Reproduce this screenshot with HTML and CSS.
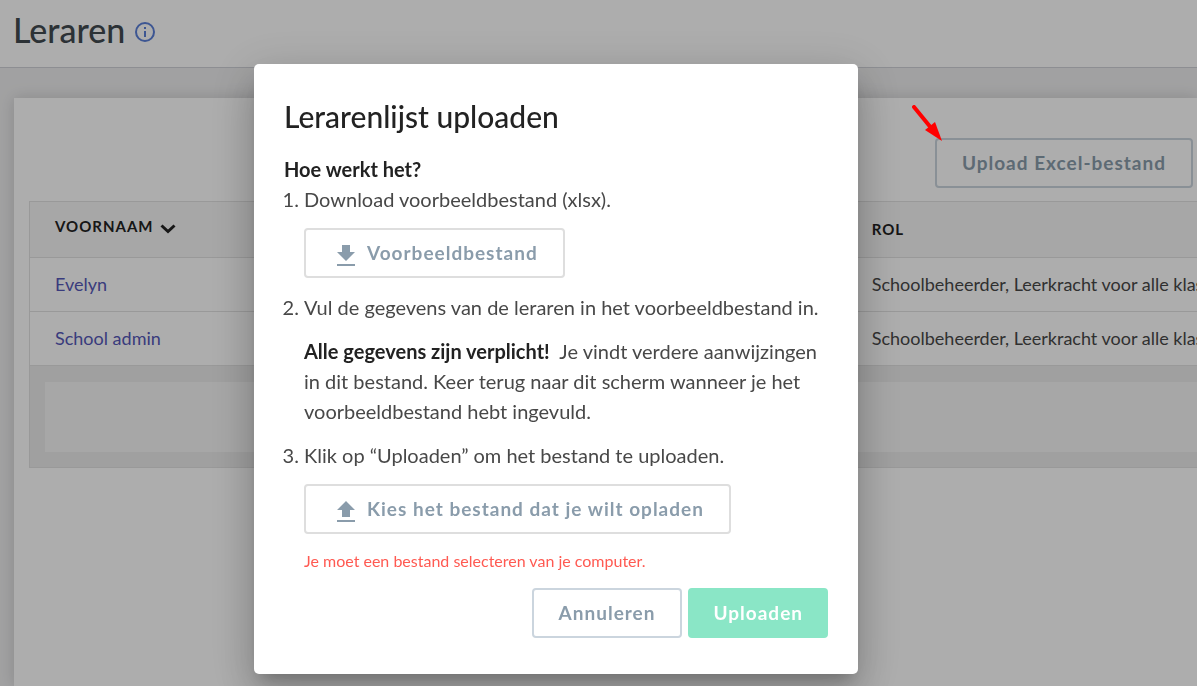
FILE: index.html
```html
<!DOCTYPE html>
<html lang="nl">
<head>
  <meta charset="UTF-8">
  <meta name="viewport" content="width=device-width, initial-scale=1.0">
  <title>Leraren</title>
  <link rel="stylesheet" href="styles.css">
</head>
<body>
  <header class="page-header">
    <h1>Leraren</h1>
    <svg class="info-icon" width="20" height="20" viewBox="0 0 20 20" fill="none" stroke="#5a7fd8" stroke-width="2">
      <circle cx="10" cy="10" r="9"/>
      <path d="M10 9v6M10 5v2"/>
    </svg>
  </header>

  <main class="content">
    <div class="card">
      <div class="toolbar">
        <button class="btn btn-outline">Upload Excel-bestand</button>
      </div>
      <table class="teachers">
        <thead>
          <tr>
            <th class="col-name">
              <span class="sort">Voornaam
                <svg width="16" height="10" viewBox="0 0 16 10" fill="none" stroke="#222" stroke-width="3">
                  <path d="M1.5 1.5L8 7.500L14.500 1.5"/>
                </svg>
              </span>
            </th>
            <th>Rol</th>
          </tr>
        </thead>
        <tbody>
          <tr>
            <td><a href="#">Evelyn</a></td>
            <td>Schoolbeheerder, Leerkracht voor alle klassen</td>
          </tr>
          <tr>
            <td><a href="#">School admin</a></td>
            <td>Schoolbeheerder, Leerkracht voor alle klassen</td>
          </tr>
        </tbody>
      </table>
      <div class="table-footer">
        <div class="table-footer-inner"></div>
      </div>
    </div>
  </main>

  <div class="overlay">
    <div class="dialog" role="dialog" aria-labelledby="dialog-title">
      <h2 id="dialog-title">Lerarenlijst uploaden</h2>
      <h3>Hoe werkt het?</h3>
      <ol class="steps">
        <li>
          <p>Download voorbeeldbestand (xlsx).</p>
          <button class="btn btn-file">
            <svg width="18" height="22" viewBox="0 0 18 22" fill="#8a9cab">
              <path d="M5 0h8v7h5l-9 9-9-9h5zM0 19h18v2H0z"/>
            </svg>
            Voorbeeldbestand
          </button>
        </li>
        <li>
          <p>Vul de gegevens van de leraren in het voorbeeldbestand in.</p>
          <p class="note"><strong>Alle gegevens zijn verplicht!</strong>&nbsp; Je vindt verdere aanwijzingen in dit bestand. Keer terug naar dit scherm wanneer je het voorbeeldbestand hebt ingevuld.</p>
        </li>
        <li>
          <p>Klik op “Uploaden” om het bestand te uploaden.</p>
          <button class="btn btn-file">
            <svg width="18" height="22" viewBox="0 0 18 22" fill="#8a9cab">
              <path d="M9 0l9 9h-5v7H5V9H0zM0 19h18v2H0z"/>
            </svg>
            Kies het bestand dat je wilt opladen
          </button>
          <p class="error">Je moet een bestand selecteren van je computer.</p>
        </li>
      </ol>
      <div class="actions">
        <button class="btn btn-outline">Annuleren</button>
        <button class="btn btn-primary">Uploaden</button>
      </div>
    </div>
  </div>

  <svg class="arrow" width="30" height="36" viewBox="0 0 30 36">
    <path d="M2 2L20 24" stroke="#f00" stroke-width="4" stroke-linecap="round"/>
    <path d="M30 36L13 25L23 17z" fill="#f00"/>
  </svg>
</body>
</html>
```
FILE: styles.css
```css
* {
  box-sizing: border-box;
}

body {
  font-family: Lato, "Open Sans", sans-serif;
  font-size: 20px;
  line-height: 30px;
  color: #484848;
  background-color: #eeeeef;
  margin: 0;
  min-height: 100vh;
  display: flex;
  flex-direction: column;
  overflow: hidden;
}

h1,
h2,
h3,
p {
  margin: 0;
}

.page-header {
  display: flex;
  align-items: center;
  gap: 10px;
  height: 68px;
  padding: 0 13px 8px;
  background-color: #fff;
  border-bottom: 1px solid #d0d2d8;
}

h1 {
  font-size: 34px;
  line-height: 40px;
  font-weight: 500;
  color: #424a50;
}

.info-icon {
  margin-top: 4px;
}

.content {
  flex: 1;
  display: flex;
  padding: 30px 0 0 14px;
}

.card {
  flex: 1;
  padding: 40px 0 0 15px;
  background-color: #fff;
  box-shadow: 0 0 15px rgba(0, 0, 0, 0.15);
}

.toolbar {
  display: flex;
  justify-content: flex-end;
  padding: 0 4px 13px 0;
}

.btn {
  font-family: inherit;
  font-size: 19px;
  font-weight: 700;
  line-height: 30px;
  letter-spacing: 1px;
  height: 50px;
  padding: 0 25px;
  border: 2px solid transparent;
  border-radius: 4px;
  background-color: #fff;
  color: #8a9cab;
  cursor: pointer;
}

.btn-outline {
  border-color: #cbd5de;
}

.btn-primary {
  padding: 0 23px;
  border-color: #8ae6c6;
  background-color: #8ae6c6;
  color: #fff;
}

.btn-file {
  display: flex;
  align-items: center;
  gap: 12px;
  padding: 0 25px 0 31px;
  border-color: #dedede;
}

.btn-file svg {
  margin-top: 5px;
}

.teachers {
  width: 100%;
  table-layout: fixed;
  border-collapse: collapse;
  border: 1px solid #e2e2e2;
  border-right: none;
  font-size: 18px;
  line-height: 30px;
}

.teachers th,
.teachers td {
  height: 54px;
  padding: 0 25px 2px;
  border-bottom: 1px solid #e2e2e2;
  text-align: left;
  white-space: nowrap;
}

.teachers th {
  height: 56px;
  background-color: #f7f7f7;
  font-size: 15px;
  font-weight: 700;
  letter-spacing: 1px;
  text-transform: uppercase;
  color: #222;
}

.col-name {
  width: 70%;
}

.sort {
  display: flex;
  align-items: center;
  gap: 6px;
  padding-bottom: 6px;
}

.sort svg {
  margin-top: 6px;
}

.teachers a {
  color: #5558b8;
  text-decoration: none;
}

.table-footer {
  padding: 16px 0 15px 15px;
  background-color: #ececec;
  border: 1px solid #e2e2e2;
  border-width: 0 0 1px 1px;
}

.table-footer-inner {
  height: 70px;
  background-color: #f7f7f7;
}

.overlay {
  position: fixed;
  inset: 0;
  display: flex;
  justify-content: center;
  align-items: flex-start;
  padding: 64px 85px 0 0;
  background-color: rgba(0, 0, 0, 0.32);
}

.dialog {
  width: 604px;
  padding: 32px 30px 36px;
  background-color: #fff;
  border-radius: 5px;
  box-shadow: 0 11px 15px -7px rgba(0, 0, 0, 0.2),
    0 24px 38px 3px rgba(0, 0, 0, 0.14),
    0 9px 46px 8px rgba(0, 0, 0, 0.12);
}

.dialog h2 {
  font-size: 30px;
  line-height: 40px;
  font-weight: 500;
  color: #222;
  margin-bottom: 18px;
}

.dialog h3 {
  font-size: 20px;
  line-height: 30px;
  font-weight: 700;
  color: #222;
}

.steps {
  margin: 0;
  padding-left: 20px;
}

.steps li {
  margin-bottom: 14px;
}

.steps .btn {
  margin-top: 14px;
}

.steps .note {
  margin-top: 14px;
}

.steps strong {
  color: #222;
}

.steps .error {
  margin-top: 14px;
  font-size: 16px;
  line-height: 26px;
  color: #ff5a52;
}

.actions {
  display: flex;
  justify-content: flex-end;
  gap: 6px;
}

.arrow {
  position: absolute;
  top: 105px;
  right: 255px;
}
```
